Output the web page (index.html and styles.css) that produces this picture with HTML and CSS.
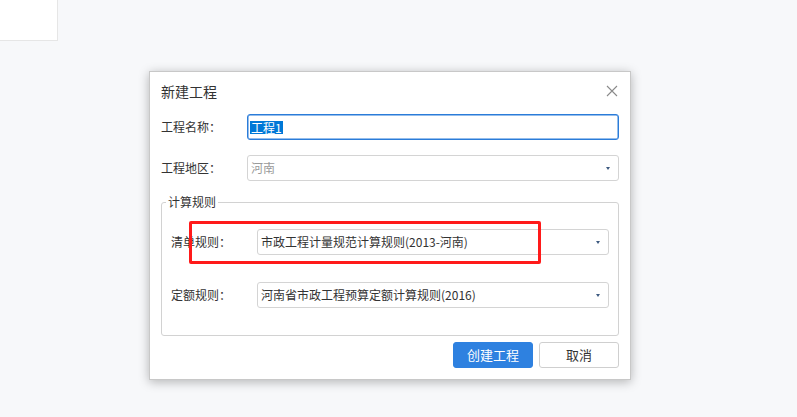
FILE: index.html
```html
<!DOCTYPE html>
<html lang="zh-CN">
<head>
    <meta charset="UTF-8">
    <meta name="viewport" content="width=device-width, initial-scale=1.0">
    <title>新建工程</title>
    <link rel="stylesheet" href="styles.css">
</head>
<body>
    <div class="corner-panel"></div>

    <div class="dialog">
        <div class="dialog-header">
            <span class="dialog-title">新建工程</span>
            <span class="close-btn">
                <svg width="12" height="12" viewBox="0 0 12 12">
                    <path d="M1 1 L11 11 M11 1 L1 11" stroke="#8a8a8a" stroke-width="1.1" fill="none"/>
                </svg>
            </span>
        </div>

        <div class="form-row first-row">
            <label class="form-label">工程名称：</label>
            <div class="text-input focused"><span class="selected">工程1</span></div>
        </div>

        <div class="form-row row-gap">
            <label class="form-label">工程地区：</label>
            <div class="select-box">
                <span class="placeholder">河南</span>
                <span class="arrow"></span>
            </div>
        </div>

        <fieldset class="rule-group">
            <legend>计算规则</legend>

            <div class="form-row">
                <label class="form-label">清单规则：</label>
                <div class="select-box">
                    <span class="value">市政工程计量规范计算规则(2013-河南)</span>
                    <span class="arrow"></span>
                </div>
            </div>

            <div class="form-row rule-gap">
                <label class="form-label">定额规则：</label>
                <div class="select-box">
                    <span class="value">河南省市政工程预算定额计算规则(2016)</span>
                    <span class="arrow"></span>
                </div>
            </div>
        </fieldset>

        <div class="dialog-footer">
            <button class="btn btn-primary">创建工程</button>
            <button class="btn btn-default">取消</button>
        </div>

        <!-- 标注框 -->
        <div class="highlight-box"></div>
    </div>
</body>
</html>
```

FILE: styles.css
```css
body {
    margin: 0;
    background-color: #f7f8fa;
    font-family: "Noto Sans CJK SC", sans-serif;
    font-size: 12px;
    color: #333;
}
.corner-panel {
    width: 57px;
    height: 40px;
    background-color: #fff;
    border-right: 1px solid #e6e6e6;
    border-bottom: 1px solid #e6e6e6;
}
.dialog {
    position: absolute;
    left: 149px;
    top: 71px;
    width: 482px;
    height: 309px;
    box-sizing: border-box;
    padding: 0 11px;
    background-color: #fff;
    border: 1px solid #c8c8c8;
    box-shadow: 0 2px 10px rgba(0,0,0,0.28);
}
.dialog-header {
    display: flex;
    align-items: center;
    justify-content: space-between;
    height: 37px;
}
.dialog-title {
    font-size: 14px;
    line-height: 20px;
}
.close-btn {
    display: flex;
    margin-right: 1px;
}
.form-row {
    display: flex;
    align-items: center;
    height: 26px;
}
.first-row {
    margin-top: 5px;
}
.row-gap {
    margin-top: 15px;
}
.form-label {
    width: 86px;
    flex-shrink: 0;
    line-height: 16px;
}
.text-input, .select-box {
    flex: 1;
    height: 26px;
    box-sizing: border-box;
    border: 1px solid #d4d4d4;
    border-radius: 3px;
    display: flex;
    align-items: center;
    position: relative;
    padding-left: 3px;
    line-height: 16px;
}
.text-input.focused {
    border: 1px solid #2b7cd9;
    box-shadow: inset 0 0 0 0.5px #2b7cd9;
    padding-left: 2px;
}
.selected {
    background-color: #0078d7;
    color: #fff;
    padding: 0 1px;
    line-height: 13px;
}
.placeholder {
    color: #9a9a9a;
}
.arrow {
    position: absolute;
    right: 8px;
    top: 11px;
    width: 0;
    height: 0;
    border-left: 2.5px solid transparent;
    border-right: 2.5px solid transparent;
    border-top: 3px solid #3e5a80;
}
.rule-group {
    margin: 13px 0 0;
    padding: 19px 9px 27px;
    border: 1px solid #d2d2d2;
    border-radius: 3px;
    min-width: 0;
}
.rule-group legend {
    margin-left: -5px;
    padding: 0 2px;
    line-height: 16px;
}
.rule-gap {
    margin-top: 27px;
}
.dialog-footer {
    display: flex;
    justify-content: flex-end;
    gap: 6px;
    margin-top: 6px;
}
.btn {
    width: 80px;
    height: 26px;
    border-radius: 3px;
    font-family: "Noto Sans CJK SC", sans-serif;
    font-size: 13px;
    line-height: 16px;
    padding: 0;
    cursor: pointer;
}
.btn-primary {
    background-color: #2e81e0;
    border: 1px solid #2e81e0;
    color: #fff;
}
.btn-default {
    background-color: #fff;
    border: 1px solid #cfcfcf;
    color: #333;
}
.highlight-box {
    position: absolute;
    left: 39px;
    top: 149px;
    width: 352px;
    height: 43px;
    box-sizing: border-box;
    border: 3px solid #ff1a1a;
    border-radius: 2px;
}
```
